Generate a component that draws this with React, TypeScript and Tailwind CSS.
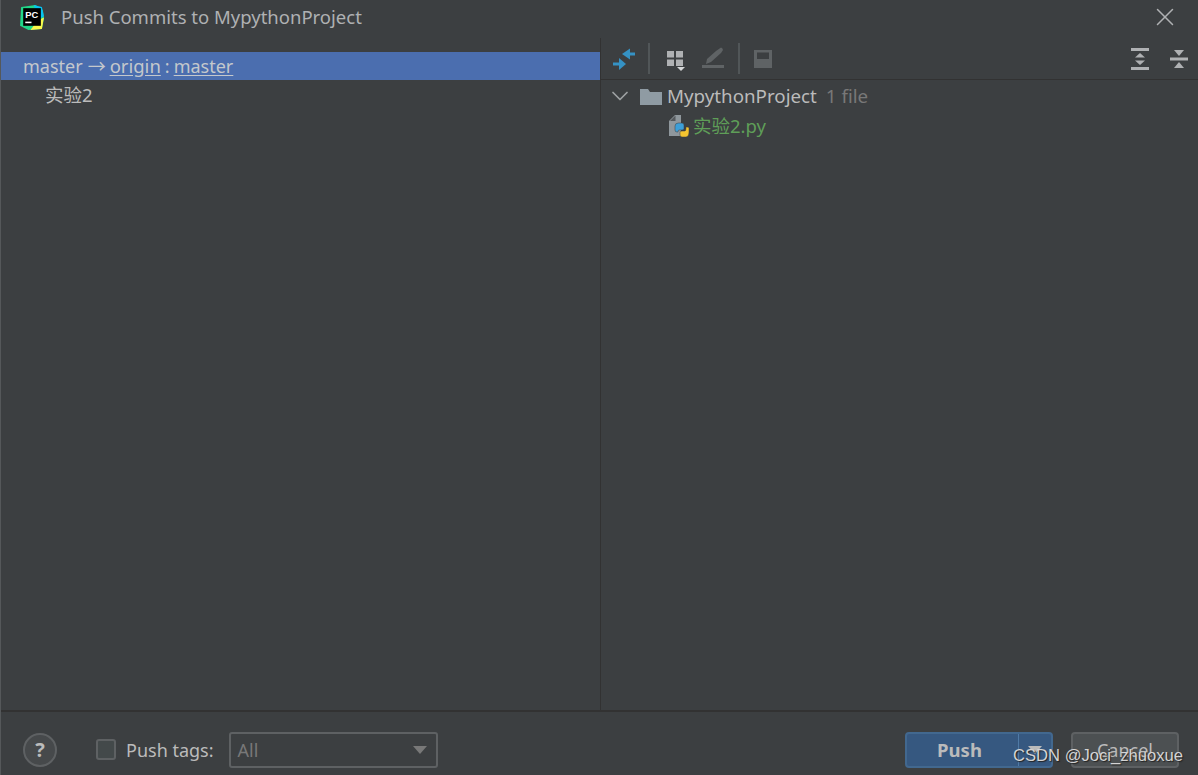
import { ChevronDown, X } from 'lucide-react';

const FONT = 'font-["Noto_Sans","Noto_Sans_CJK_SC",sans-serif]';

// ── Icons ─────────────────────────────────────────────────────────────────────
function PyCharmLogo() {
  return (
    <svg width="27" height="27" viewBox="0 0 26 26">
      <path d="M3 3 L17 1 L24 6 L25 14 L23 24 L10 25 L2 21 Z" fill="#21d789" />
      <path d="M15 1 L23 3 L25 12 L20 14 Z" fill="#07c3f2" />
      <path d="M12 25 L23 24 L25 13 L19 16 Z" fill="#fcf84a" />
      <rect x="5" y="4" width="17" height="17" fill="#000000" />
      <text x="7" y="13" fontSize="9" fontWeight="700" fill="#ffffff" className='font-["Liberation_Sans",sans-serif]'>PC</text>
      <rect x="7" y="17" width="6" height="1.5" fill="#ffffff" />
    </svg>
  );
}

function PythonFileIcon() {
  return (
    <svg width="22" height="24" viewBox="0 0 22 24">
      <path d="M0 7 L6 1 H12 V22 H0 Z" fill="#8f979c" />
      <path d="M1 7 H6.5 V1.5 Z" fill="#55595c" />
      <path d="M6 16 V12 Q6 9 9.5 9 H13 Q15 9 15 11 V14.5 Q15 16 13 16 H10 Q9 16 9 18 H8 Q6 18 6 16 Z" fill="#3c9fd8" stroke="#3c3f41" strokeWidth="0.5" />
      <path d="M20 14 V18 Q20 23 16.5 23 H13 Q11 23 11 21 V18 Q11 17 13 17 H16 Q17 17 17 13 H18 Q20 13 20 14 Z" fill="#f4c430" stroke="#3c3f41" strokeWidth="0.5" />
    </svg>
  );
}

function MergeArrowsIcon() {
  return (
    <svg width="24" height="24" viewBox="0 0 24 24" fill="#3592c4">
      <path d="M10 7 L18 1.5 V12.5 Z" />
      <rect x="17" y="5.5" width="6" height="3" />
      <path d="M14 17 L7 11 V23 Z" />
      <rect x="1" y="15.5" width="7" height="3" />
    </svg>
  );
}

function GroupIcon() {
  return (
    <svg width="22" height="24" viewBox="0 0 22 24">
      <rect x="1" y="4" width="7" height="6.5" fill="#afb1b3" />
      <rect x="10" y="4" width="7" height="6.5" fill="#afb1b3" />
      <rect x="1" y="12.5" width="7" height="6.5" fill="#afb1b3" />
      <rect x="10" y="12.5" width="7" height="6.5" fill="#afb1b3" />
      <path d="M11 20 H19 L15 24 Z" fill="#d5d7d8" />
    </svg>
  );
}

function EditIcon() {
  return (
    <svg width="24" height="24" viewBox="0 0 24 24" fill="#5f6365">
      <path d="M15 4 L20 0.5 Q21.5 0.5 22 3 L20 6 L10 15 L5 17 L6 12 Z" />
      <rect x="1" y="18" width="22" height="3" />
    </svg>
  );
}

function DiffPreviewIcon() {
  return (
    <svg width="20" height="20" viewBox="0 0 20 20">
      <rect x="1" y="1" width="18" height="18" fill="#5f6365" />
      <rect x="4" y="3.5" width="12" height="6.5" fill="#3c3f41" />
    </svg>
  );
}

function ExpandIcon() {
  return (
    <svg width="18" height="22" viewBox="0 0 18 22" fill="#afb1b3">
      <rect x="0" y="0" width="18" height="3" />
      <rect x="0" y="19" width="18" height="3" />
      <path d="M9 5 L14 9.5 H4 Z" />
      <path d="M9 17 L14 12.5 H4 Z" />
    </svg>
  );
}

function CollapseIcon() {
  return (
    <svg width="18" height="22" viewBox="0 0 18 22" fill="#afb1b3">
      <path d="M9 8 L14 2 H4 Z" />
      <rect x="0" y="9.5" width="18" height="3" />
      <path d="M9 14 L14 20 H4 Z" />
    </svg>
  );
}

export default function App() {
  return (
    <div className={`relative flex h-[775px] w-[1198px] flex-col overflow-hidden border-l border-l-[#55585a] bg-[#3c3f41] text-[#bbbbbb] ${FONT}`}>

      {/* ── Title bar ─────────────────────────────────────────────────────── */}
      <div className="mb-[4px] flex h-[34px] flex-shrink-0 items-center pr-[18px] pl-[17px]">
        <PyCharmLogo />
        <span className="ml-[16px] flex-1 text-[18.5px] leading-none text-[#afb1b3]">Push Commits to MypythonProject</span>
        <X size={30} strokeWidth={1.2} className="text-[#afb1b3]" />
      </div>

      {/* ── Main panels ───────────────────────────────────────────────────── */}
      <div className="flex min-h-0 flex-1">

        {/* Commits tree */}
        <div className="w-[600px] flex-shrink-0 border-r border-r-[#323232] pt-[14px] text-[18px]">
          <div className="flex h-[28px] items-center bg-[#4b6eaf] pl-[22px] leading-none text-[#c4c8cc]">
            <span>master</span>
            <span className='mr-[4px] ml-[5px] w-[18px] -translate-y-[1px] font-["Noto_Sans_CJK_SC",sans-serif] leading-none'>→</span>
            <span className="text-[18.5px] underline underline-offset-2">origin</span>
            <span className="mx-[4px]">:</span>
            <span className="underline underline-offset-2">master</span>
          </div>
          <div className="flex h-[30px] items-center pl-[44px] text-[18.5px] leading-none">实验2</div>
        </div>

        {/* Changes panel */}
        <div className="flex min-w-0 flex-1 flex-col">
          <div className="flex h-[42px] flex-shrink-0 items-center border-b border-b-[#323232] pr-[10px] pl-[11px]">
            <MergeArrowsIcon />
            <div className="mx-[12px] h-[31px] w-[2px] bg-[#515658]" />
            <div className="ml-[4px]"><GroupIcon /></div>
            <div className="ml-[13px]"><EditIcon /></div>
            <div className="mx-[13px] h-[31px] w-[2px] bg-[#515658]" />
            <DiffPreviewIcon />
            <div className="flex-1" />
            <ExpandIcon />
            <div className="ml-[21px]"><CollapseIcon /></div>
          </div>

          <div className="flex h-[32px] items-center pl-[5px] text-[18.75px] leading-none">
            <ChevronDown size={28} strokeWidth={1.5} className="text-[#9da0a2]" />
            <svg width="22" height="17" viewBox="0 0 22 17" className="ml-[6px]" fill="#8f9ba3">
              <path d="M0 1 H8 L10 4 H22 V17 H0 Z" />
            </svg>
            <span className="ml-[5px]">MypythonProject</span>
            <span className="ml-[9px] text-[#787878]">1 file</span>
          </div>
          <div className="flex h-[28px] items-center pl-[68px] text-[18.5px] leading-none text-[#5f9e58]">
            <PythonFileIcon />
            <span className="ml-[2px]">实验2.py</span>
          </div>
        </div>
      </div>

      {/* ── Footer ────────────────────────────────────────────────────────── */}
      <div className="flex h-[65px] flex-shrink-0 items-center border-t-2 border-t-[#323232] pt-[12px] pr-[19px] pl-[22px] text-[18px]">
        <div className="flex h-[34px] w-[34px] items-center justify-center rounded-full border-2 border-[#5e6163] bg-[#46494b] text-[20px] font-bold text-[#bbbbbb]">?</div>
        <div className="ml-[39px] h-[21px] w-[20px] rounded-[3px] border-2 border-[#5e6163] bg-[#43494a]" />
        <span className="ml-[10px] leading-none text-[#bbbbbb]">Push tags:</span>
        <div className="ml-[15px] flex h-[36px] w-[209px] items-center justify-between rounded-[3px] border-2 border-[#5e6163] pr-[9px] pl-[7px] leading-none text-[#787878]">
          <span>All</span>
          <svg width="14" height="8" viewBox="0 0 14 8" fill="#787878"><path d="M0 0 H14 L7 8 Z" /></svg>
        </div>
        <div className="flex-1" />
        <div className="flex h-[36px] w-[148px] items-stretch rounded-[4px] border-2 border-[#42688f] bg-[#365880]">
          <div className="flex w-[111px] items-center justify-center pt-[1px] pr-[6px] text-[18.5px] font-bold leading-none text-[#bbbbbb]">Push</div>
          <div className="flex flex-1 items-center justify-center border-l border-l-[#4f7aa6]">
            <svg width="14" height="8" viewBox="0 0 14 8" fill="#bbbbbb"><path d="M0 0 H14 L7 8 Z" /></svg>
          </div>
        </div>
        <div className="ml-[18px] flex h-[36px] w-[108px] items-center justify-center rounded-[4px] border-2 border-[#5e6163] bg-[#4c5052] leading-none text-[#bbbbbb]">Cancel</div>
      </div>

      {/* ── CSDN watermark ────────────────────────────────────────────────── */}
      <span className='absolute top-[746px] left-[1012px] font-["Liberation_Sans",sans-serif] text-[16.6px] leading-[20px] text-[#d4d4d4] [text-shadow:1px_1px_1px_#222222]'>CSDN @Joci_zhuoxue</span>
    </div>
  );
}
